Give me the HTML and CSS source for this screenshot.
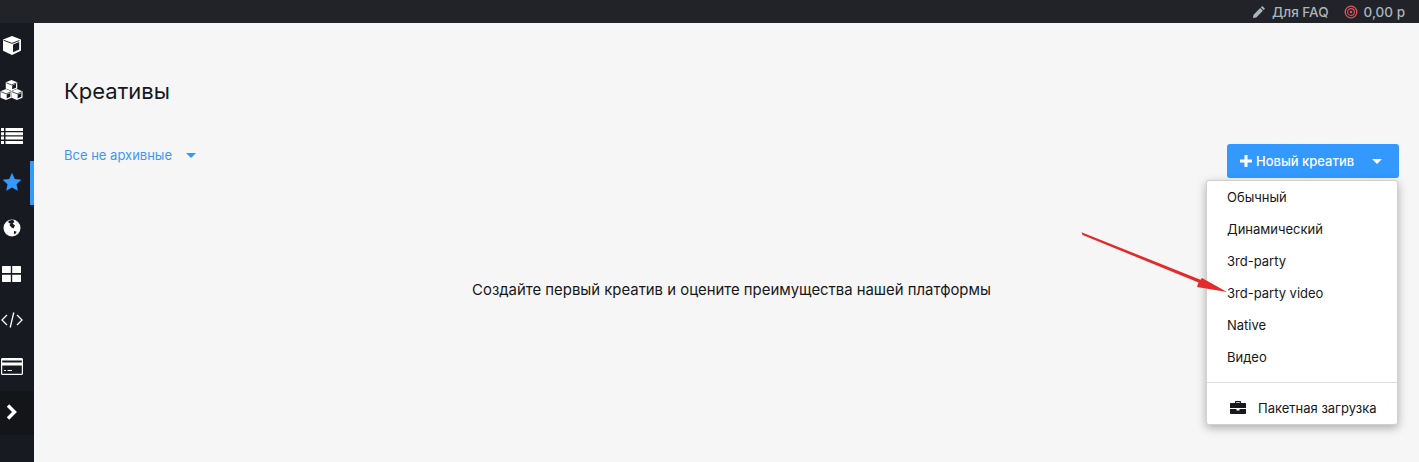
FILE: index.html
```html
<!DOCTYPE html>
<html lang="ru">
<head>
    <meta charset="UTF-8">
    <title>Креативы</title>
    <link rel="stylesheet" href="styles.css">
</head>
<body>
    <header class="topbar">
        <a class="topbar-link">
            <svg class="topbar-icon" viewBox="0 0 14 14"><path fill="#a9b4bd" d="M10.3 1 13 3.7 11.6 5.100 8.900 2.400ZM8.200 3.100 10.900 5.800 4.300 12.400 0.900 13.100 1.600 9.700Z"/></svg>
            Для FAQ
        </a>
        <a class="topbar-link balance">
            <svg class="topbar-icon" viewBox="0 0 14 14" fill="none" stroke="#e0525c"><circle cx="7" cy="7" r="5.800" stroke-width="1.300"/><circle cx="7" cy="7" r="3.400" stroke-width="1.100"/><circle cx="7" cy="7" r="1.300" fill="#e0525c" stroke="none"/></svg>
            0,00 р
        </a>
    </header>

    <div class="layout">
        <nav class="sidebar">
            <a class="nav-item">
                <svg viewBox="1.5 1 17 18" width="18" height="19"><path fill="#fff" fill-rule="evenodd" d="M10 1 18.500 4.300V15L10 19 1.500 15V4.300ZM11 9V16.500L16.800 13.900V6.600Z"/><path fill="none" stroke="#171a20" stroke-width=".9" d="M2 5 10 8 17 5.300"/></svg>
            </a>
            <a class="nav-item">
                <svg viewBox="0 0 24 22" width="24" height="22">
                    <g fill="#fff" fill-rule="evenodd">
                        <path d="M12 .5 18 3V9.500L12 12 6 9.500V3ZM12.700 6.200V10.300L16.700 8.600V4.500Z"/>
                        <path d="M6.300 10 12 12.300V19L6.300 21.500.5 19V12.300ZM7 15.700V19.800L10.800 18.100V14Z"/>
                        <path d="M17.700 10 23.500 12.300V19L17.700 21.500 12 19V12.300ZM18.400 15.700V19.800L22.300 18.100V14Z"/>
                    </g>
                    <path fill="none" stroke="#171a20" stroke-width=".8" d="M6.500 3.500 12 5.700 17.500 3.500M1 12.800 6.500 15 11.500 12.800M12.500 12.800 18 15 23 12.800"/>
                </svg>
            </a>
            <a class="nav-item">
                <svg viewBox="0 0 22 16" width="22" height="16"><path fill="#fff" d="M0 0H3V3H0ZM4.500 0H22V3H4.500ZM0 4.300H3V7.300H0ZM4.500 4.300H22V7.300H4.500ZM0 8.600H3V11.600H0ZM4.500 8.600H22V11.600H4.500ZM0 12.900H3V15.900H0ZM4.500 12.900H22V15.900H4.500Z"/></svg>
            </a>
            <a class="nav-item active">
                <svg viewBox="0 0 20 20" width="20" height="20"><path fill="#3399ff" d="M10 .8 12.800 6.900 19.400 7.700 14.500 12.200 15.800 18.800 10 15.500 4.200 18.800 5.500 12.200 .6 7.700 7.200 6.900Z"/></svg>
            </a>
            <a class="nav-item">
                <svg viewBox="0 0 18 18" width="18" height="18"><circle cx="9" cy="9" r="8.500" fill="#fff"/><path fill="#171a20" d="M5.500 1.800 10 .8 11.500 3 9.500 4.500 12 6.500 10.500 9.500 8.500 8.500 6.500 6 7.500 4.500 5.500 4ZM11 12 13.500 12.500 12 15.500 11 14.500Z"/></svg>
            </a>
            <a class="nav-item">
                <svg viewBox="0 0 19 16" width="19" height="16"><path fill="#fff" d="M1 0H8.500C8.700 0 8.800 .1 8.800 .3V7H0V1C0 .4.400 0 1 0ZM10.500 0H18C18.600 0 19 .4 19 1V7H10.200V.3C10.200 .1 10.300 0 10.500 0ZM0 8.700H8.800V15.700C8.800 15.900 8.700 16 8.500 16H1C.4 16 0 15.600 0 15ZM10.200 8.700H19V15C19 15.600 18.600 16 18 16H10.500C10.300 16 10.200 15.900 10.200 15.700Z"/></svg>
            </a>
            <a class="nav-item">
                <svg viewBox="0 0 22 16" width="22" height="16" fill="none" stroke="#fff" stroke-width="1.300"><path d="M6 3 1 8 6 13M16 3 21 8 16 13M12.800 .5 9.200 15.500"/></svg>
            </a>
            <a class="nav-item">
                <svg viewBox="0 0 22 17" width="22" height="17"><path fill="#fff" fill-rule="evenodd" d="M1.500 0H20.500C21.300 0 22 .7 22 1.500V15.500C22 16.300 21.300 17 20.500 17H1.500C.7 17 0 16.300 0 15.500V1.500C0 .7.700 0 1.500 0ZM1.200 2.500V4.500H20.800V2.500ZM1.200 7.500V15.500C1.200 15.700 1.300 15.800 1.500 15.800H20.500C20.700 15.800 20.800 15.700 20.800 15.500V7.500ZM3 12H5V13H3ZM6.500 12H11V13H6.500Z"/></svg>
            </a>
            <a class="nav-item nav-toggle">
                <svg viewBox="0 0 12 16" width="12" height="16"><path fill="none" stroke="#fff" stroke-width="3.400" d="M2 1.500 8.500 8 2 14.500"/></svg>
            </a>
        </nav>

        <main class="content">
            <h1 class="page-title">Креативы</h1>
            <div class="toolbar">
                <a class="filter">Все не архивные <span class="caret filter-caret"></span></a>
                <div class="new-creative">
                    <button class="btn-primary">
                        <svg class="plus" viewBox="0 0 12 12" width="12" height="12"><path fill="#fff" d="M4.500 0H7.500V4.500H12V7.500H7.500V12H4.500V7.500H0V4.500H4.500Z"/></svg>
                        Новый креатив
                        <span class="caret btn-caret"></span>
                    </button>
                    <ul class="dropdown">
                        <li>Обычный</li>
                        <li>Динамический</li>
                        <li>3rd-party</li>
                        <li>3rd-party video</li>
                        <li>Native</li>
                        <li>Видео</li>
                        <li class="divider"></li>
                        <li class="bulk">
                            <svg viewBox="0 0 16 14" width="16" height="14"><path fill="#16181c" fill-rule="evenodd" d="M5 2V1C5 .4 5.400 0 6 0H10C10.600 0 11 .4 11 1V2H15C15.600 2 16 2.400 16 3V7H0V3C0 2.400.400 2 1 2ZM6.200 1.200V2H9.800V1.200ZM0 8H6.500V9.500H9.500V8H16V12C16 12.600 15.600 13 15 13H1C.4 13 0 12.600 0 12Z"/></svg>
                            Пакетная загрузка
                        </li>
                    </ul>
                </div>
            </div>
            <p class="empty">Создайте первый креатив и оцените преимущества нашей платформы</p>
        </main>
    </div>

    <!-- red annotation arrow on top of the screenshot -->
    <svg class="annotation" viewBox="0 0 150 70" width="150" height="70">
        <path fill="#e32b2b" d="M.5 .2 1.600 3 117.500 50.500 116 55 146 60 121 46 119.500 47.800Z"/>
    </svg>
</body>
</html>
```

FILE: styles.css
```css
* {
    margin: 0;
    padding: 0;
    box-sizing: border-box;
}

body {
    background: #f6f6f6;
    color: #16181c;
    font-family: Inter, 'Noto Sans', sans-serif;
    font-size: 13px;
    height: 462px;
    overflow: hidden;
}

.topbar {
    display: flex;
    justify-content: flex-end;
    align-items: center;
    gap: 15px;
    height: 23px;
    padding-right: 14px;
    background: #212329;
}

.topbar-link {
    display: flex;
    align-items: center;
    gap: 6px;
    color: #a9b4bd;
    font-size: 13.500px;
    font-weight: 500;
}

.topbar-icon {
    width: 14px;
    height: 14px;
}

.layout {
    display: flex;
    height: 439px;
}

.sidebar {
    width: 34px;
    flex-shrink: 0;
    background: #171a20;
}

.nav-item {
    display: flex;
    align-items: center;
    justify-content: center;
    height: 46px;
    padding-right: 11px;
}

.nav-item:first-child {
    height: 44px;
}

.nav-item.active,
.nav-toggle {
    height: 44px;
    margin-top: 2px;
    padding-bottom: 2px;
}

.nav-item.active {
    border-right: 4px solid #3399ff;
    padding-right: 7px;
}

.nav-toggle {
    background: #131519;
}

.content {
    flex: 1;
    padding: 55px 20px 0 30px;
}

.page-title {
    font-size: 22px;
    font-weight: 400;
    line-height: 27px;
}

.toolbar {
    display: flex;
    justify-content: space-between;
    align-items: flex-start;
    margin-top: 39px;
}

.filter {
    margin-top: 3px;
    color: #3f97f5;
    font-size: 13px;
    line-height: 16px;
}

.caret {
    display: inline-block;
    border-left: 5px solid transparent;
    border-right: 5px solid transparent;
    border-top: 5px solid #3399ff;
    vertical-align: 2px;
}

.filter-caret {
    margin-left: 10px;
}

.new-creative {
    position: relative;
}

.btn-primary {
    display: flex;
    align-items: center;
    width: 172px;
    height: 34px;
    padding-left: 13px;
    border: none;
    border-radius: 3px;
    background: #3399ff;
    color: #fff;
    font-family: inherit;
    font-size: 13px;
    font-weight: 500;
}

.plus {
    margin-right: 4px;
}

.btn-caret {
    margin-left: auto;
    margin-right: 17px;
    border-top-color: #fff;
    vertical-align: 0;
}

.dropdown {
    position: absolute;
    top: 36px;
    right: 1px;
    width: 192px;
    height: 245px;
    padding-top: 1px;
    list-style: none;
    background: #fff;
    border: 1px solid #d0d0d0;
    border-radius: 3px;
    box-shadow: 0 3px 10px rgba(0, 0, 0, 0.3);
}

.dropdown li {
    height: 32px;
    padding-left: 20px;
    line-height: 30px;
}

.dropdown .divider {
    height: 1px;
    margin-top: 8px;
    padding: 0;
    background: #dedede;
}

.dropdown .bulk {
    display: flex;
    align-items: center;
    gap: 12px;
    margin-top: 9px;
    padding-left: 23px;
    line-height: 32px;
}

.empty {
    margin-top: 102px;
    font-size: 14.900px;
    line-height: 20px;
    text-align: center;
}

.annotation {
    position: absolute;
    left: 1081px;
    top: 232px;
}
```
